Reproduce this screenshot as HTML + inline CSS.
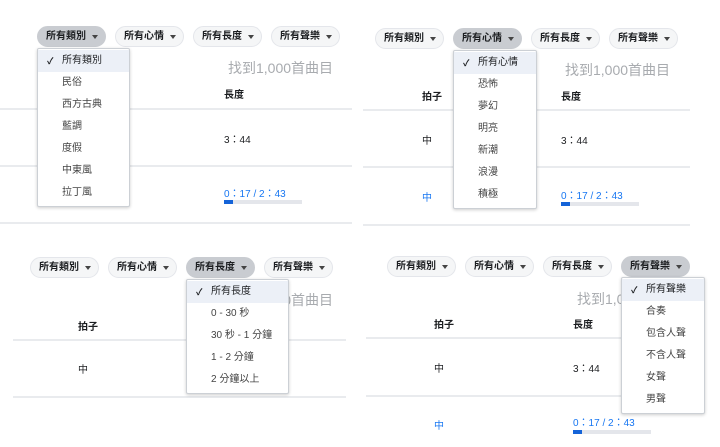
<!DOCTYPE html>
<html><head><meta charset="utf-8"><style>
*{margin:0;padding:0;box-sizing:border-box}
body{width:720px;height:447px;background:#fff;position:relative;overflow:hidden;font-family:"Liberation Sans","Noto Sans CJK TC",sans-serif;color:#1c1e21}
.pill{position:absolute;height:21px;width:69px;border-radius:11px;background:#f5f6f7;border:1px solid #e4e6eb;font-size:10px;font-weight:bold;line-height:19px;padding-left:8px;white-space:nowrap}
.pill.on{background:#c9ccd1;border-color:#c9ccd1}
.pill:after{content:"";position:absolute;right:7px;top:8px;border-left:3.5px solid transparent;border-right:3.5px solid transparent;border-top:4px solid #444}
.dd{position:absolute;background:#fff;border:1px solid #ccd0d5;box-shadow:0 1px 3px rgba(0,0,0,.2);border-radius:2px;font-size:10px;color:#444}
.dd div{height:22px;line-height:22px;padding-left:24px;white-space:nowrap}
.dd div.sel{background:#ecf0f7;color:#1c1e21;position:relative}
.dd div.sel:before{content:"✓";position:absolute;left:9px;font-size:9px;font-weight:bold}
.line{position:absolute;height:2px;background:#e9ebee}
.t{position:absolute;font-size:10px;white-space:nowrap}
.b{font-weight:bold}
.found{position:absolute;font-size:14px;color:#a8abaf;white-space:nowrap}
.blue{color:#1877f2}
.bar{position:absolute;height:4px;width:78px;background:#e4e6eb}
.bar i{position:absolute;left:0;top:0;height:4px;width:9px;background:#1463d8}
</style></head><body>

<!-- panel 1 -->
<div class="found" style="left:228px;top:58px">找到1,000首曲目</div>
<div class="t b" style="left:224px;top:86px">長度</div>
<div class="line" style="left:0;top:108px;width:352px"></div>
<div class="t" style="left:224px;top:131px">3：44</div>
<div class="line" style="left:0;top:165px;width:352px"></div>
<div class="t blue" style="left:224px;top:185px">0：17 / 2：43</div>
<div class="bar" style="left:224px;top:200px"><i></i></div>
<div class="line" style="left:0;top:222px;width:352px"></div>
<div class="pill on" style="left:37px;top:26px">所有類別</div>
<div class="pill" style="left:115px;top:26px">所有心情</div>
<div class="pill" style="left:193px;top:26px">所有長度</div>
<div class="pill" style="left:271px;top:26px">所有聲樂</div>
<div class="dd" style="left:37px;top:48px;width:93px;padding:1px 0 2px">
<div class="sel">所有類別</div><div>民俗</div><div>西方古典</div><div>藍調</div><div>度假</div><div>中東風</div><div>拉丁風</div></div>

<!-- panel 2 -->
<div class="found" style="left:565px;top:60px">找到1,000首曲目</div>
<div class="t b" style="left:422px;top:88px">拍子</div>
<div class="t b" style="left:561px;top:88px">長度</div>
<div class="line" style="left:363px;top:109px;width:327px"></div>
<div class="t" style="left:422px;top:132px">中</div>
<div class="t" style="left:561px;top:132px">3：44</div>
<div class="line" style="left:363px;top:166px;width:327px"></div>
<div class="t blue" style="left:422px;top:189px">中</div>
<div class="t blue" style="left:561px;top:187px">0：17 / 2：43</div>
<div class="bar" style="left:561px;top:202px"><i></i></div>
<div class="line" style="left:363px;top:224px;width:327px"></div>
<div class="pill" style="left:375px;top:28px">所有類別</div>
<div class="pill on" style="left:453px;top:28px">所有心情</div>
<div class="pill" style="left:531px;top:28px">所有長度</div>
<div class="pill" style="left:609px;top:28px">所有聲樂</div>
<div class="dd" style="left:453px;top:50px;width:84px;padding:1px 0 2px">
<div class="sel">所有心情</div><div>恐怖</div><div>夢幻</div><div>明亮</div><div>新潮</div><div>浪漫</div><div>積極</div></div>

<!-- panel 3 -->
<div class="found" style="left:228px;top:290px">找到1,000首曲目</div>
<div class="t b" style="left:78px;top:318px">拍子</div>
<div class="line" style="left:13px;top:339px;width:333px"></div>
<div class="t" style="left:78px;top:361px">中</div>
<div class="line" style="left:13px;top:396px;width:333px"></div>
<div class="pill" style="left:30px;top:257px">所有類別</div>
<div class="pill" style="left:108px;top:257px">所有心情</div>
<div class="pill on" style="left:186px;top:257px">所有長度</div>
<div class="pill" style="left:264px;top:257px">所有聲樂</div>
<div class="dd" style="left:186px;top:279px;width:103px;padding:1px 0 2px">
<div class="sel">所有長度</div><div>0 - 30 秒</div><div>30 秒 - 1 分鐘</div><div>1 - 2 分鐘</div><div>2 分鐘以上</div></div>

<!-- panel 4 -->
<div class="found" style="left:577px;top:289px">找到1,000首曲目</div>
<div class="t b" style="left:434px;top:316px">拍子</div>
<div class="t b" style="left:573px;top:316px">長度</div>
<div class="line" style="left:366px;top:337px;width:324px"></div>
<div class="t" style="left:434px;top:360px">中</div>
<div class="t" style="left:573px;top:360px">3：44</div>
<div class="line" style="left:366px;top:395px;width:324px"></div>
<div class="t blue" style="left:434px;top:417px">中</div>
<div class="t blue" style="left:573px;top:414px">0：17 / 2：43</div>
<div class="bar" style="left:573px;top:430px"><i></i></div>
<div class="pill" style="left:387px;top:256px">所有類別</div>
<div class="pill" style="left:465px;top:256px">所有心情</div>
<div class="pill" style="left:543px;top:256px">所有長度</div>
<div class="pill on" style="left:621px;top:256px">所有聲樂</div>
<div class="dd" style="left:621px;top:277px;width:84px;padding:1px 0 2px">
<div class="sel">所有聲樂</div><div>合奏</div><div>包含人聲</div><div>不含人聲</div><div>女聲</div><div>男聲</div></div>

</body></html>
